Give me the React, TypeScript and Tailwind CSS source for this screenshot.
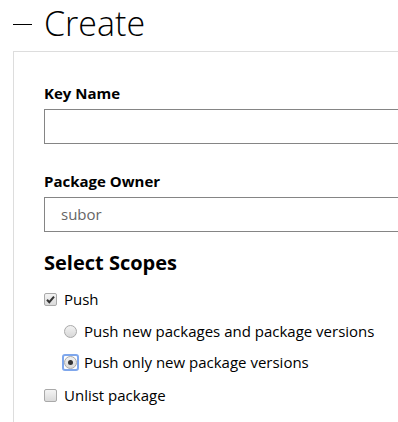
const font = { fontFamily: '"Open Sans", "Noto Sans", sans-serif' }

function CheckBox({ checked }: { checked?: boolean }) {
  return (
    <span className="relative inline-block w-[13px] h-[13px] border border-[#a9a9a9] rounded-[2px] bg-gradient-to-b from-[#f4f4f4] to-[#dadada] shrink-0">
      {checked && (
        <svg viewBox="0 0 13 13" className="absolute -left-px -top-px w-[13px] h-[13px]">
          <path d="M3 6.8 L5.3 9.2 L10 3.6" fill="none" stroke="#333" strokeWidth="2" />
        </svg>
      )}
    </span>
  )
}

function Radio({ checked }: { checked?: boolean }) {
  const dot = (
    <span className="flex items-center justify-center w-[13px] h-[13px] rounded-full border border-[#a9a9a9] bg-gradient-to-b from-[#f2f2f2] to-[#d8d8d8] shrink-0">
      {checked && <span className="w-[5px] h-[5px] rounded-full bg-[#333]" />}
    </span>
  )
  if (!checked) return dot
  return (
    <span className="flex items-center justify-center w-[17px] h-[17px] -mx-[2px] rounded-[3px] border-2 border-[#7fa7ec] shrink-0">
      {dot}
    </span>
  )
}

export default function App() {
  return (
    <div className="w-[398px] h-[422px] overflow-hidden bg-white text-black" style={font}>
      <div className="flex items-center h-[51px] pl-[13px] pb-[5px]">
        <span className="inline-block w-[19px] h-px bg-black mr-[12px] mt-[2px]" />
        <span className="text-[34px] font-light leading-none">Create</span>
      </div>
      <div className="ml-[13px] w-[420px] border-l border-t border-[#dddddd] pl-[30px] pt-[31px] h-[400px]">
        <div className="text-[15px] font-bold leading-[20px] mb-[6px]">Key Name</div>
        <div className="h-[35px] border border-[#858585]" />
        <div className="text-[15px] font-bold leading-[20px] mt-[27px] mb-[6px]">Package Owner</div>
        <div className="h-[35px] border border-[#858585] flex items-center pl-[16px] text-[15px] text-[#666]">
          subor
        </div>
        <div className="text-[20px] font-bold leading-[28px] mt-[17px]">Select Scopes</div>
        <div className="flex flex-col text-[15px] leading-[20px] mt-[6px]">
          <label className="flex items-center gap-[7px] h-[32px]">
            <CheckBox checked />
            <span>Push</span>
          </label>
          <label className="flex items-center gap-[7px] h-[32px] pl-[20px]">
            <Radio />
            <span>Push new packages and package versions</span>
          </label>
          <label className="flex items-center gap-[7px] h-[30px] pl-[20px]">
            <Radio checked />
            <span>Push only new package versions</span>
          </label>
          <label className="flex items-center gap-[7px] h-[36px]">
            <CheckBox />
            <span>Unlist package</span>
          </label>
        </div>
      </div>
    </div>
  )
}
